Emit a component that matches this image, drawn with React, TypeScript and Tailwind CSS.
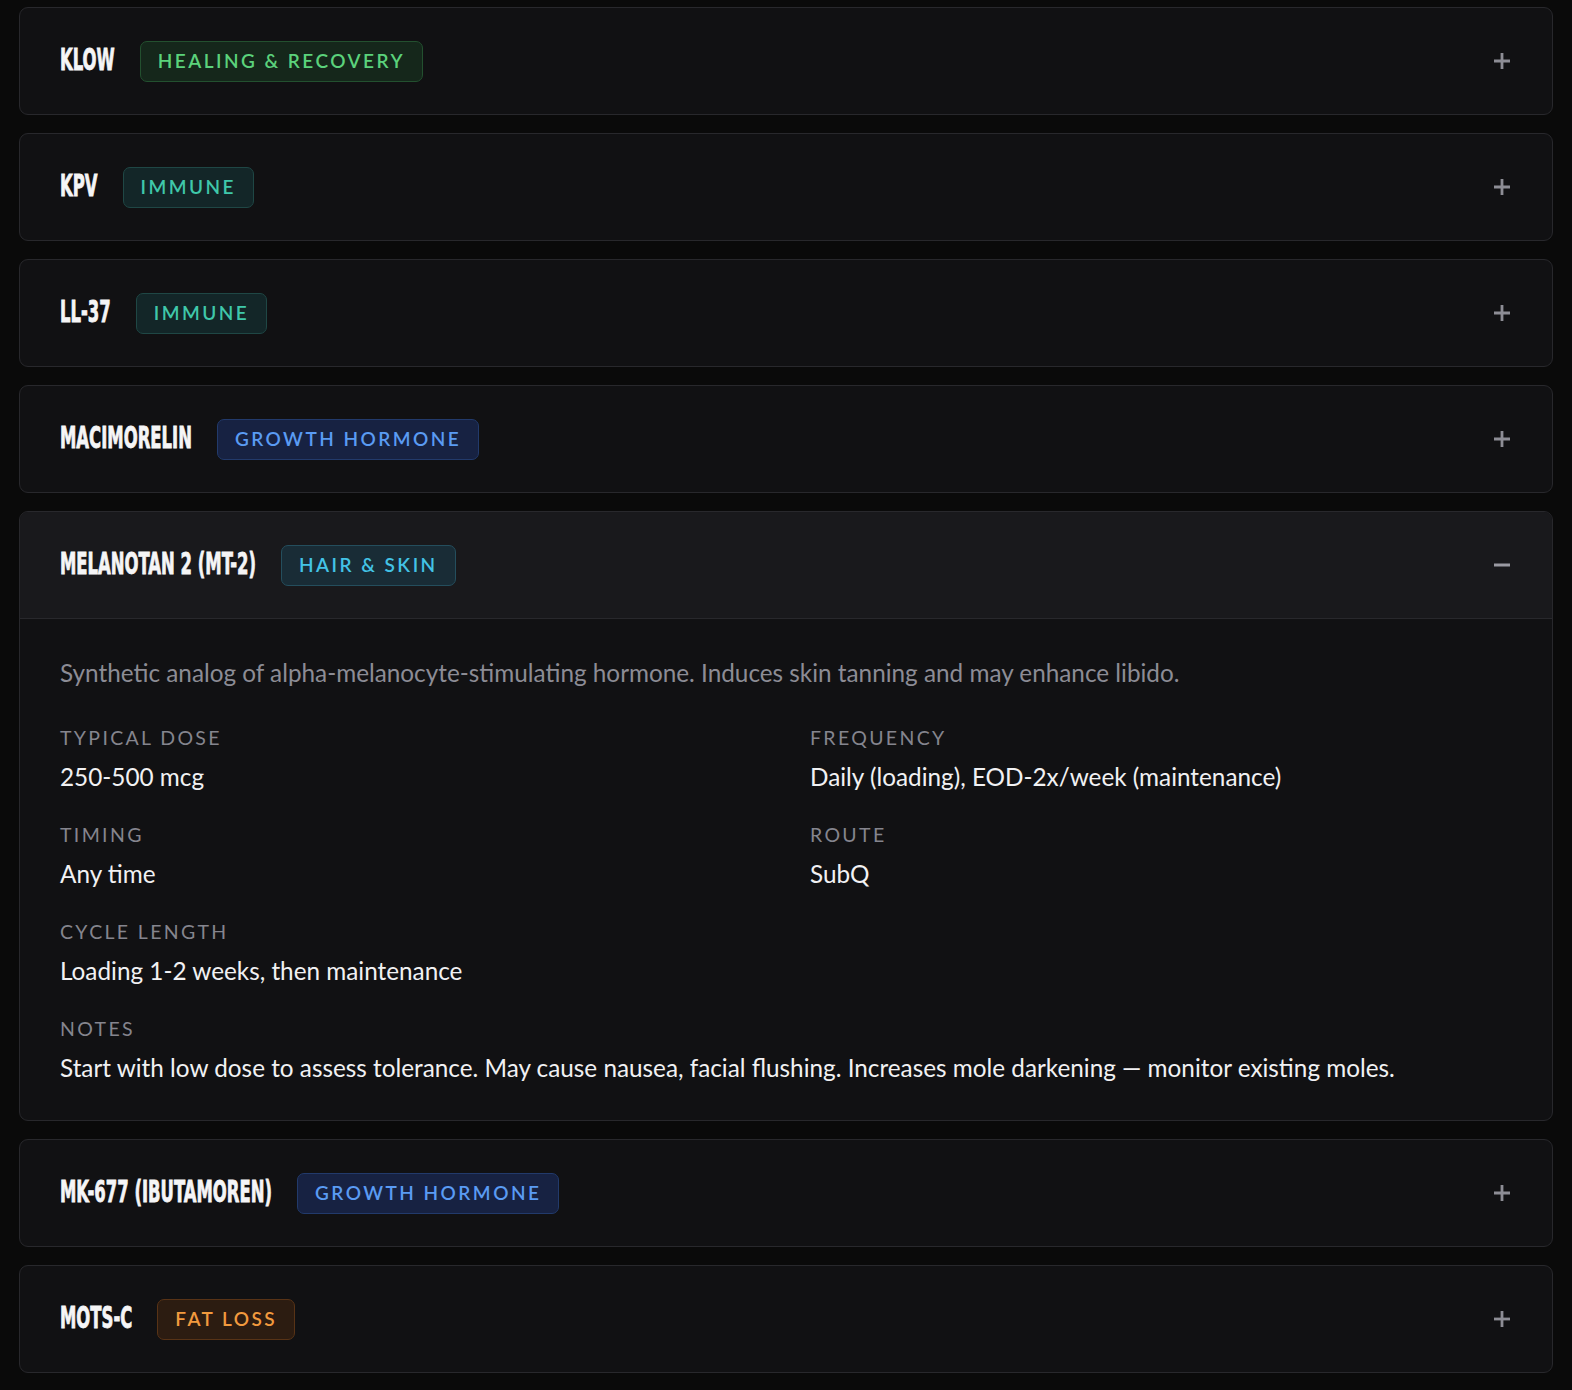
import React from "react";

type Item = {
  name: string;
  tag: string;
  tone: "green" | "teal" | "blue" | "cyan" | "orange";
  open?: boolean;
};

const items: Item[] = [
  { name: "KLOW", tag: "HEALING & RECOVERY", tone: "green" },
  { name: "KPV", tag: "IMMUNE", tone: "teal" },
  { name: "LL-37", tag: "IMMUNE", tone: "teal" },
  { name: "MACIMORELIN", tag: "GROWTH HORMONE", tone: "blue" },
  { name: "MELANOTAN 2 (MT-2)", tag: "HAIR & SKIN", tone: "cyan", open: true },
  { name: "MK-677 (IBUTAMOREN)", tag: "GROWTH HORMONE", tone: "blue" },
  { name: "MOTS-C", tag: "FAT LOSS", tone: "orange" },
];

const toneClass: Record<Item["tone"], string> = {
  green: "bg-[#15271b] border-[#23502f] text-[#5bd27b]",
  teal: "bg-[#132628] border-[#1f4745] text-[#3fc8aa]",
  blue: "bg-[#172242] border-[#223a6b] text-[#5a9bf3]",
  cyan: "bg-[#192c36] border-[#244e5d] text-[#43c3e6]",
  orange: "bg-[#2c1c11] border-[#583316] text-[#f29a3e]",
};

const bodyFont = { fontFamily: "Lato, 'Noto Sans', sans-serif" };
const headFont = {
  fontFamily: "'DejaVu Sans Condensed', 'DejaVu Sans', sans-serif",
};

function PlusIcon() {
  return (
    <svg width="20" height="20" viewBox="0 0 20 20" className="shrink-0">
      <line x1="10" y1="2" x2="10" y2="18" stroke="#8d8d95" strokeWidth="2.8" />
      <line x1="2" y1="10" x2="18" y2="10" stroke="#8d8d95" strokeWidth="2.8" />
    </svg>
  );
}

function MinusIcon() {
  return (
    <svg width="20" height="20" viewBox="0 0 20 20" className="shrink-0">
      <line x1="2" y1="10" x2="18" y2="10" stroke="#9a9aa2" strokeWidth="2.8" />
    </svg>
  );
}

function Field({ label, value, wide }: { label: string; value: string; wide?: boolean }) {
  return (
    <div className={wide ? "col-span-2" : ""}>
      <div className="text-[19.5px] leading-[24px] tracking-[0.12em] text-[#85858e]">{label}</div>
      <div className="mt-[11px] text-[24.3px] leading-[32px] text-[#f1f1f3]">{value}</div>
    </div>
  );
}

function Card({ item }: { item: Item }) {
  return (
    <div className="rounded-[9px] border border-[#28282c] bg-[#111113] overflow-hidden">
      <div
        className={
          "flex h-[106px] items-center justify-between px-10 " +
          (item.open ? "bg-[#19191c] border-b border-[#28282c] h-[107px]" : "")
        }
      >
        <div className="flex items-center gap-[25px]">
          <span
            className="inline-block origin-center scale-y-[1.65] -translate-y-[1px] text-[18.3px] leading-none font-bold text-[#f5f5f6] [-webkit-text-stroke:0.5px_#f5f5f6]"
            style={headFont}
          >
            {item.name}
          </span>
          <span
            className={
              "flex h-[41px] items-center rounded-[7px] border px-[17px] text-[19px] font-semibold tracking-[0.13em] " +
              toneClass[item.tone]
            }
            style={bodyFont}
          >
            {item.tag}
          </span>
        </div>
        {item.open ? <MinusIcon /> : <PlusIcon />}
      </div>
      {item.open && (
        <div className="px-10 pt-[38px] pb-[36px]" style={bodyFont}>
          <p className="text-[24.3px] leading-[32px] text-[#8c8c95]">
            Synthetic analog of alpha-melanocyte-stimulating hormone. Induces skin tanning and may enhance libido.
          </p>
          <div className="mt-[37px] grid grid-cols-2 gap-x-12 gap-y-[30px]">
            <Field label="TYPICAL DOSE" value="250-500 mcg" />
            <Field label="FREQUENCY" value="Daily (loading), EOD-2x/week (maintenance)" />
            <Field label="TIMING" value="Any time" />
            <Field label="ROUTE" value="SubQ" />
            <Field label="CYCLE LENGTH" value="Loading 1-2 weeks, then maintenance" />
            <div />
            <Field
              wide
              label="NOTES"
              value="Start with low dose to assess tolerance. May cause nausea, facial flushing. Increases mole darkening — monitor existing moles."
            />
          </div>
        </div>
      )}
    </div>
  );
}

export default function App() {
  return (
    <div className="min-h-[1390px] bg-[#0a0a0a] px-[19px] pt-[7px] pb-[17px]">
      <div className="flex flex-col gap-[18px]">
        {items.map((it) => (
          <Card key={it.name} item={it} />
        ))}
      </div>
    </div>
  );
}
